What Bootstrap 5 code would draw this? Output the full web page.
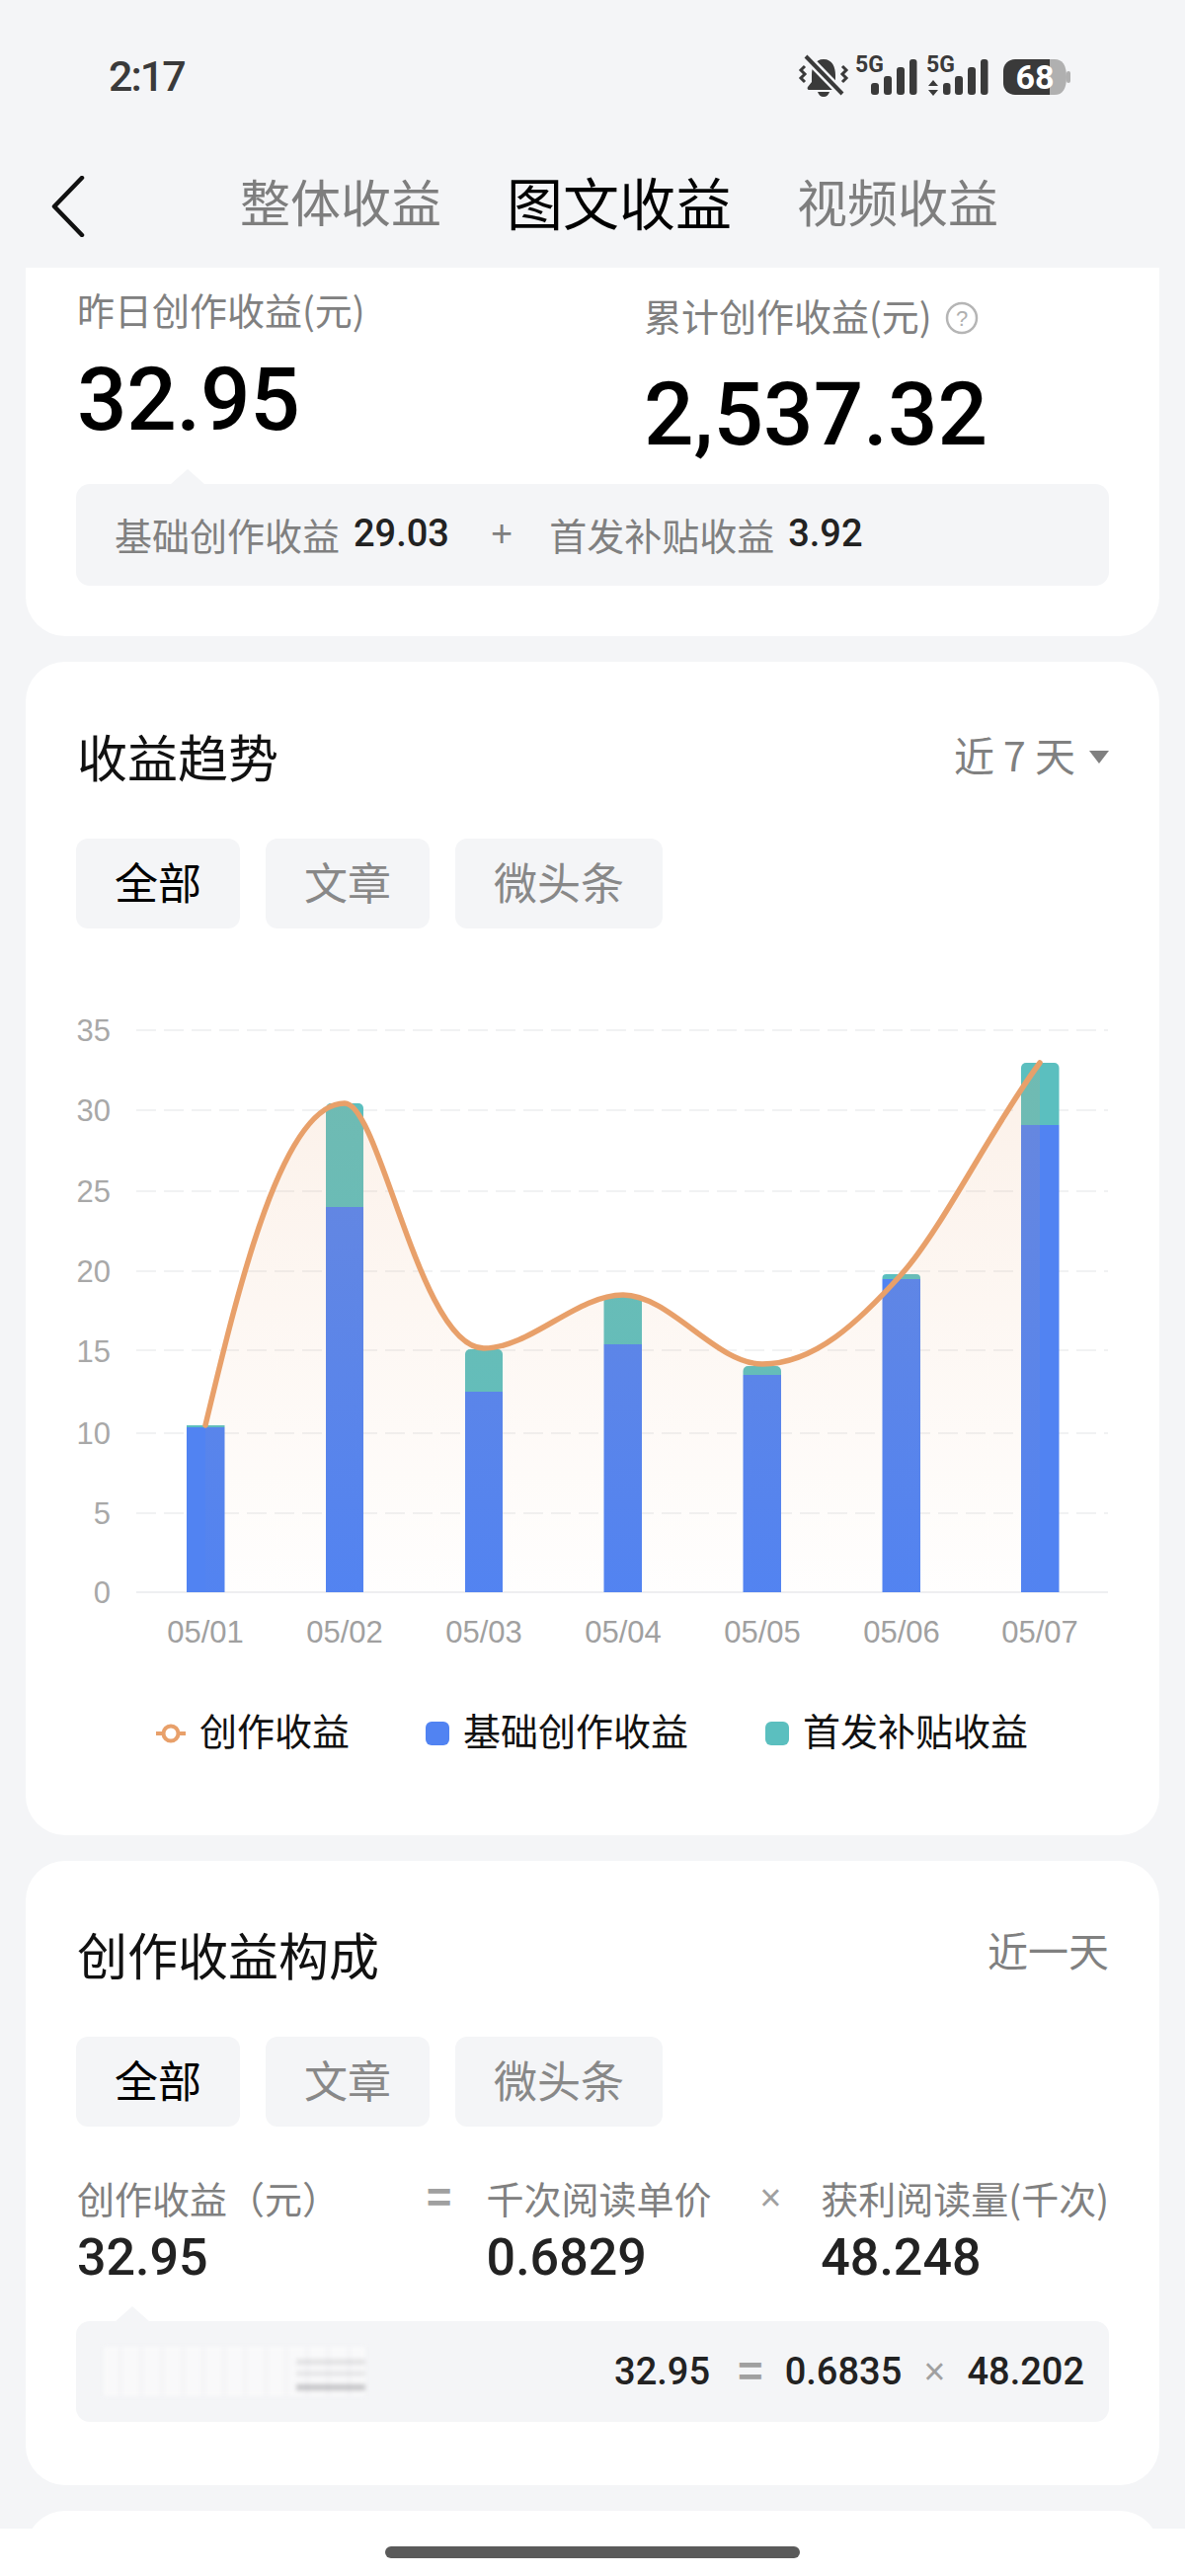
<!DOCTYPE html>
<html lang="zh">
<head>
<meta charset="utf-8">
<title>图文收益</title>
<link href="https://cdn.jsdelivr.net/npm/bootstrap@5.3.0/dist/css/bootstrap.min.css" rel="stylesheet">
<style>
html,body{margin:0;background:#f4f5f7}
body{width:1200px;height:2608px;overflow:hidden;font-family:Roboto,"Noto Sans CJK SC",sans-serif;color:#111}
.cjk{font-family:"Noto Sans CJK SC",sans-serif}
.num{font-family:Roboto,"Liberation Sans",sans-serif;font-weight:500}
.status-row{height:154px;padding:0 110px}
.clock{font-size:43px;line-height:44px;font-weight:500;color:#3a3a3a;font-family:Roboto,sans-serif;letter-spacing:-2px}
.tab-row{height:117px;padding:0 0 20px 52px}
.back-arrow{margin-top:12px}
.tab-list{margin-left:157px;gap:66px}
.tab-item{font-size:51px;line-height:60px;color:#7e7e7e;padding:0;white-space:nowrap}
.tab-item.on{font-size:57px;color:#000}
.scroller{flex:1 1 auto;min-height:0;overflow:hidden}
.panel{background:#fff;border:0;margin:0 26px 26px;border-radius:40px}
.panel-first{border-radius:0 0 40px 40px;margin-bottom:26px;padding:17px 51px 51px 52px}
.lbl{font-size:38px;line-height:50px;color:#808080;white-space:nowrap}
.big-col{width:574px}
.big-val{font-size:89px;line-height:90px;color:#000}
.big-tight{letter-spacing:-.3px}
.mt-a{margin-top:22px}.mt-b{margin-top:31px}
.lbl-shift{margin-top:6px}
.qmark{margin:6px 0 0 13px}
.tip-box{background:#f4f5f7;border-radius:14px;position:relative;font-size:38px;margin-left:-1px}
.tip-box::before{content:"";position:absolute;top:-15px;border-left:18px solid transparent;border-right:18px solid transparent;border-bottom:16px solid #f4f5f7}
.tip-a{height:103px;margin-top:25px;padding:0 0 3px 39px}
.tip-a::before{left:95px}
.tip-b{height:102px;padding:0 25px 0 28px;margin-top:34px}
.tip-b::before{left:39px}
.gray-t{color:#808080}
.dark-t{color:#222}
.gap-val{margin-left:14px}
.plus{color:#808080;margin:0 37px 0 42px;font-family:"Liberation Sans",sans-serif}
.pad-x{padding:0 51px 0 52px}
.head-t{font-size:51px;line-height:60px;color:#111;font-weight:400}
.range{font-size:41px;line-height:60px;color:#808080}
.range-a{margin-top:-4px;margin-left:-2px}
.range-b{margin-top:-10px}
.caret-d{width:0;height:0;border-left:10px solid transparent;border-right:10px solid transparent;border-top:13px solid #808080;margin-left:14px;margin-top:2px}
.chip-row{gap:26px;margin:54px 0 0 -1px}
.chip-btn{height:91px;padding:0 39px 6px;font-size:44px;line-height:60px;background:#f4f5f7;border:0;border-radius:12px;color:#888}
.chip-btn.on{color:#000}
.chart-svg{display:block;margin-top:20px}
.panel-2{padding:65px 0 58px}
.panel-3{padding:64px 0 64px}
.sign{font-size:38px;line-height:50px;color:#a0a0a0;font-family:"Liberation Sans",sans-serif}
.eq-sign{font-size:44px;font-weight:700}
.f-a{width:354px}.f-b{width:277px}.s-a{width:61px}.s-b{width:62px}
.formula{margin-top:47px}
.mid-val{font-size:52px;line-height:60px;color:#222;margin-top:6px}
.fogged{width:265px;height:50px;filter:blur(2px);background:
 linear-gradient(to bottom,transparent 22%,rgba(150,150,155,.3) 30%,transparent 40%,transparent 46%,rgba(150,150,155,.25) 54%,transparent 62%,transparent 72%,rgba(120,120,125,.5) 82%,transparent 92%) right/70px 100% no-repeat,
 repeating-linear-gradient(to right,#f9f9fa 0,#f9f9fa 14px,#f3f3f5 17px,#f9f9fa 21px)}
.eqn{font-size:38px;line-height:50px;gap:22px}
.eqn-first{margin-right:6px}
.nav-strip{height:48px;background:#fff;flex:0 0 48px;padding-top:18px}
.home-bar{width:420px;height:12px;background:#5a5a5a;border-radius:6px;margin:0 auto}
</style>
</head>
<body class="d-flex flex-column">
<header>
  <div class="status-row d-flex align-items-center justify-content-between">
    <span class="clock">2:17</span>
    <svg width="285" height="50" viewBox="805 51 285 50" aria-hidden="true">
      <g fill="#3a3a3a">
        <path d="M834 59c-9 0-12 8-12 16v7l-4 5c-1 1 0 3 1 3h30c1 0 2-2 1-3l-4-5v-7c0-8-3-16-12-16z"/>
        <path d="M828 92h12c-1 3-3 5-6 5s-5-2-6-5z"/>
      </g>
      <path d="M816 56l37 38" stroke="#f4f5f7" stroke-width="9" fill="none"/>
      <path d="M816 56l37 38" stroke="#3a3a3a" stroke-width="4" fill="none"/>
      <path d="M815 66l-4 4 4 4-4 4 4 4M853 66l4 4-4 4 4 4-4 4" stroke="#3a3a3a" stroke-width="3" fill="none"/>
      <text x="866" y="72" font-family="Roboto,sans-serif" font-weight="700" font-size="23" fill="#3a3a3a">5G</text>
      <g fill="#3a3a3a">
        <rect x="882" y="83" width="8" height="12" rx="3"/><rect x="895" y="76" width="8" height="19" rx="3"/><rect x="908" y="67" width="8" height="28" rx="3"/><rect x="921" y="59" width="7.500" height="36" rx="3"/>
        <rect x="955" y="83" width="7.500" height="12" rx="3"/><rect x="967" y="76" width="8" height="19" rx="3"/><rect x="980" y="67" width="8" height="28" rx="3"/><rect x="993" y="59" width="7.500" height="36" rx="3"/>
        <path d="M945 80l5 6h-10zM945 96l5-6h-10z"/>
      </g>
      <text x="938" y="72" font-family="Roboto,sans-serif" font-weight="700" font-size="23" fill="#3a3a3a">5G</text>
      <path d="M1060 59h8c8 0 12 6 12 18s-4 18-12 18h-8z" fill="#b0b0b0"/>
      <rect x="1080" y="71" width="4" height="12" rx="2" fill="#b0b0b0"/>
      <path d="M1028 59h35v36h-35c-7 0-12-5-12-12v-12c0-7 5-12 12-12z" fill="#3a3a3a"/>
      <text x="1048" y="89" text-anchor="middle" font-family="Roboto,sans-serif" font-weight="700" font-size="34" fill="#fff">68</text>
    </svg>
  </div>
  <div class="tab-row d-flex align-items-center">
    <svg class="back-arrow" width="34" height="62" viewBox="0 0 34 62" aria-hidden="true"><path d="M31 2L3 31l28 29" stroke="#111" stroke-width="4.500" fill="none" stroke-linecap="round" stroke-linejoin="round"/></svg>
    <ul class="nav tab-list cjk">
      <li class="nav-item"><span class="nav-link tab-item">整体收益</span></li>
      <li class="nav-item"><span class="nav-link tab-item on">图文收益</span></li>
      <li class="nav-item"><span class="nav-link tab-item">视频收益</span></li>
    </ul>
  </div>
</header>

<main class="scroller cjk">
  <section class="card panel panel-first">
    <div class="d-flex">
      <div class="big-col">
        <div class="lbl">昨日创作收益(元)</div>
        <div class="big-val big-tight num mt-a">32.95</div>
      </div>
      <div>
        <div class="lbl lbl-shift d-flex align-items-center">累计创作收益(元)
          <svg class="qmark" width="34" height="34" viewBox="0 0 34 34" aria-hidden="true"><circle cx="17" cy="17" r="15" fill="none" stroke="#b5b5b5" stroke-width="2.500"/><text x="17" y="25" text-anchor="middle" font-size="22" fill="#b0b0b0" font-family="Liberation Sans,sans-serif">?</text></svg>
        </div>
        <div class="big-val num mt-b">2,537.32</div>
      </div>
    </div>
    <div class="tip-box tip-a d-flex align-items-center">
      <span class="gray-t">基础创作收益</span>
      <span class="num dark-t gap-val">29.03</span>
      <span class="plus">+</span>
      <span class="gray-t">首发补贴收益</span>
      <span class="num dark-t gap-val">3.92</span>
    </div>
  </section>

  <section class="card panel panel-2">
    <div class="pad-x">
      <div class="d-flex justify-content-between align-items-center">
        <h2 class="head-t m-0">收益趋势</h2>
        <div class="d-flex align-items-center"><span class="range range-a">近 7 天</span><span class="caret-d"></span></div>
      </div>
      <div class="d-flex chip-row">
        <button class="btn chip-btn on" type="button">全部</button>
        <button class="btn chip-btn" type="button">文章</button>
        <button class="btn chip-btn" type="button">微头条</button>
      </div>
    </div>
    <svg class="chart-svg" width="1148" height="840" viewBox="26 960 1148 840" role="img" aria-label="收益趋势图">
      <defs>
        <linearGradient id="areaFill" x1="0" y1="1076" x2="0" y2="1612" gradientUnits="userSpaceOnUse">
          <stop offset="0" stop-color="#e8a06a" stop-opacity=".15"/>
          <stop offset="1" stop-color="#e8a06a" stop-opacity=".01"/>
        </linearGradient>
      </defs>
      <g stroke="#f1f2f3" stroke-width="2" stroke-dasharray="20 8">
        <path d="M138 1043H1122M138 1124H1122M138 1206H1122M138 1287H1122M138 1367H1122M138 1451H1122M138 1532H1122"/>
      </g>
      <path d="M138 1612H1122" stroke="#eeeff1" stroke-width="2"/>
      <g font-family="Liberation Sans,sans-serif" font-size="31" fill="#a8a8a8" text-anchor="end">
        <text x="112" y="1054">35</text><text x="112" y="1135">30</text><text x="112" y="1217">25</text><text x="112" y="1298">20</text><text x="112" y="1379">15</text><text x="112" y="1462">10</text><text x="112" y="1543">5</text><text x="112" y="1623">0</text>
      </g>
      <g fill="#5183f2">
        <rect x="189" y="1445" width="38.500" height="167"/>
        <rect x="330" y="1222" width="38" height="390"/>
        <rect x="471" y="1409" width="38" height="203"/>
        <rect x="611.500" y="1361" width="38.500" height="251"/>
        <rect x="752.500" y="1392" width="38.500" height="220"/>
        <rect x="893.500" y="1295" width="38.500" height="317"/>
        <rect x="1034" y="1139" width="38.500" height="473"/>
      </g>
      <g fill="#5bbfbf">
        <path d="M330 1222v-100a5 5 0 0 1 5-5h28a5 5 0 0 1 5 5v100z"/>
        <path d="M471 1409v-38a5 5 0 0 1 5-5h28a5 5 0 0 1 5 5v38z"/>
        <path d="M611.500 1361v-44a5 5 0 0 1 5-5h28.500a5 5 0 0 1 5 5v44z"/>
        <path d="M752.500 1392v-4a5 5 0 0 1 5-5h28.500a5 5 0 0 1 5 5v4z"/>
        <path d="M893.500 1295v-1a4 4 0 0 1 4-4h30.500a4 4 0 0 1 4 4v1z"/>
        <path d="M1034 1139v-58a5 5 0 0 1 5-5h28.500a5 5 0 0 1 5 5v58z"/>
        <rect x="189" y="1443" width="38.500" height="2"/>
      </g>
      <path d="M208 1443C240 1310 285 1117 349 1117C385 1117 425 1365 490 1365C537 1365 584 1311 631 1311C678 1311 725 1381 772 1381C825 1381 870 1338 913 1290C955 1243 1005 1140 1053 1076V1612H208Z" fill="url(#areaFill)"/>
      <path d="M208 1443C240 1310 285 1117 349 1117C385 1117 425 1365 490 1365C537 1365 584 1311 631 1311C678 1311 725 1381 772 1381C825 1381 870 1338 913 1290C955 1243 1005 1140 1053 1076" fill="none" stroke="#e8a06a" stroke-width="5.500" stroke-linecap="round"/>
      <g font-family="Liberation Sans,sans-serif" font-size="31" fill="#a0a0a0" text-anchor="middle">
        <text x="208" y="1663">05/01</text><text x="349" y="1663">05/02</text><text x="490" y="1663">05/03</text><text x="631" y="1663">05/04</text><text x="772" y="1663">05/05</text><text x="913" y="1663">05/06</text><text x="1053" y="1663">05/07</text>
      </g>
      <path d="M158 1755H188" stroke="#e8a06a" stroke-width="4"/>
      <circle cx="173" cy="1755" r="7.500" fill="#fff" stroke="#e8a06a" stroke-width="4"/>
      <rect x="431" y="1743" width="24" height="24" rx="6" fill="#5183f2"/>
      <rect x="775" y="1743" width="24" height="24" rx="6" fill="#5bbfbf"/>
      <g font-family="Noto Sans CJK SC,sans-serif" font-size="38" fill="#111">
        <text x="202" y="1767">创作收益</text><text x="469" y="1767">基础创作收益</text><text x="813" y="1767">首发补贴收益</text>
      </g>
    </svg>
  </section>

  <section class="card panel panel-3">
    <div class="pad-x">
      <div class="d-flex justify-content-between align-items-center">
        <h2 class="head-t m-0">创作收益构成</h2>
        <span class="range range-b">近一天</span>
      </div>
      <div class="d-flex chip-row">
        <button class="btn chip-btn on" type="button">全部</button>
        <button class="btn chip-btn" type="button">文章</button>
        <button class="btn chip-btn" type="button">微头条</button>
      </div>
      <div class="d-flex formula">
        <div class="f-a"><div class="lbl">创作收益（元）</div><div class="mid-val num">32.95</div></div>
        <div class="s-a sign eq-sign">=</div>
        <div class="f-b"><div class="lbl">千次阅读单价</div><div class="mid-val num">0.6829</div></div>
        <div class="s-b sign">×</div>
        <div><div class="lbl">获利阅读量(千次)</div><div class="mid-val num">48.248</div></div>
      </div>
      <div class="tip-box tip-b d-flex align-items-center justify-content-between">
        <div class="fogged"></div>
        <div class="eqn d-flex">
          <span class="num dark-t eqn-first">32.95</span><span class="sign eq-sign">=</span><span class="num dark-t">0.6835</span><span class="sign">×</span><span class="num dark-t">48.202</span>
        </div>
      </div>
    </div>
  </section>

  <section class="card panel" style="height:200px"></section>
</main>
<footer class="nav-strip"><div class="home-bar"></div></footer>
<script src="https://cdn.jsdelivr.net/npm/bootstrap@5.3.0/dist/js/bootstrap.bundle.min.js"></script>
</body>
</html>
